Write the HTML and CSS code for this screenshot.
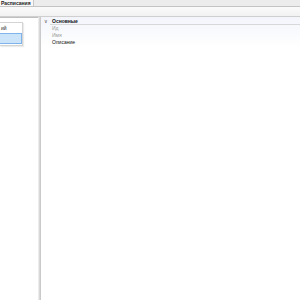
FILE: index.html
```html
<!DOCTYPE html>
<html>
<head>
<meta charset="utf-8">
<link rel="stylesheet" href="styles.css">
</head>
<body>
<div class="app">
  <div class="tabs">
    <div class="tab">Расписания</div>
  </div>
  <div class="toolbar"></div>
  <div class="main">
    <div class="left">
      <div class="list">
        <div class="item">ий</div>
        <div class="item sel"></div>
      </div>
    </div>
    <div class="splitter"></div>
    <div class="grid">
      <div class="row cat">
        <div class="gutter"><span class="chev">&#x2228;</span></div>
        <div class="label">Основные</div>
      </div>
      <div class="row">
        <div class="gutter"></div>
        <div class="label muted">Ид</div>
      </div>
      <div class="row">
        <div class="gutter"></div>
        <div class="label muted">Имя</div>
      </div>
      <div class="row">
        <div class="gutter"></div>
        <div class="label">Описание</div>
      </div>
      <div class="rest"></div>
    </div>
  </div>
</div>
</body>
</html>
```
FILE: styles.css
```css
html, body {
  margin: 0;
  padding: 0;
  width: 300px;
  height: 300px;
  overflow: hidden;
  background: #ffffff;
  font-family: "Liberation Sans", Arial, sans-serif;
}
.app {
  display: flex;
  flex-direction: column;
  height: 300px;
}
.tabs {
  height: 6px;
  background: #ececec;
  border-bottom: 1px solid #c4c4c4;
  display: flex;
  align-items: flex-end;
}
.tab {
  height: 6px;
  width: 32px;
  background: #f8f8f8;
  border-right: 1px solid #c8c8c8;
  font-size: 5px;
  font-weight: bold;
  line-height: 6px;
  color: #222;
  padding-left: 1px;
  overflow: hidden;
  white-space: nowrap;
}
.toolbar {
  height: 9px;
  background: linear-gradient(#fafafa, #f2f2f2);
  border-bottom: 1px solid #cfcfcf;
}
.main {
  flex: 1;
  display: flex;
}
.left {
  width: 38px;
  background: #fff;
  border-top: 1px solid #bfbfbf;
}
.list {
  width: 22px;
  margin-top: 4px;
  border: 1px solid #d4d4d4;
  border-left: none;
  background: #fff;
  padding: 1px 0;
  box-shadow: 1px 1px 1px rgba(0, 0, 0, 0.08);
}
.item {
  height: 8px;
  font-size: 5px;
  line-height: 8px;
  color: #222;
  padding-left: 1px;
  overflow: hidden;
}
.item.sel {
  height: 9px;
  background: #cce4fa;
  border: 1px solid #7eb4ea;
  border-left: none;
  margin-top: 1px;
}
.splitter {
  width: 3px;
  background: linear-gradient(90deg, #f6f6f6, #d8d8d8 50%, #c4c4c4);
}
.grid {
  flex: 1;
  display: flex;
  flex-direction: column;
  padding-top: 1px;
  background: linear-gradient(#f3f5fb, #ffffff 30px);
}
.row {
  height: 7px;
  display: flex;
}
.gutter {
  width: 9px;
  display: flex;
  align-items: center;
  justify-content: center;
}
.chev {
  font-size: 5px;
  line-height: 7px;
  color: #555;
}
.label {
  flex: 1;
  font-size: 5px;
  line-height: 7px;
  padding-left: 2px;
  color: #111;
}
.cat .label {
  font-weight: bold;
  border-bottom: 1px solid #d8d8d8;
  line-height: 6px;
}
.muted {
  color: #9a9a9a;
}
.rest {
  flex: 1;
}
```
